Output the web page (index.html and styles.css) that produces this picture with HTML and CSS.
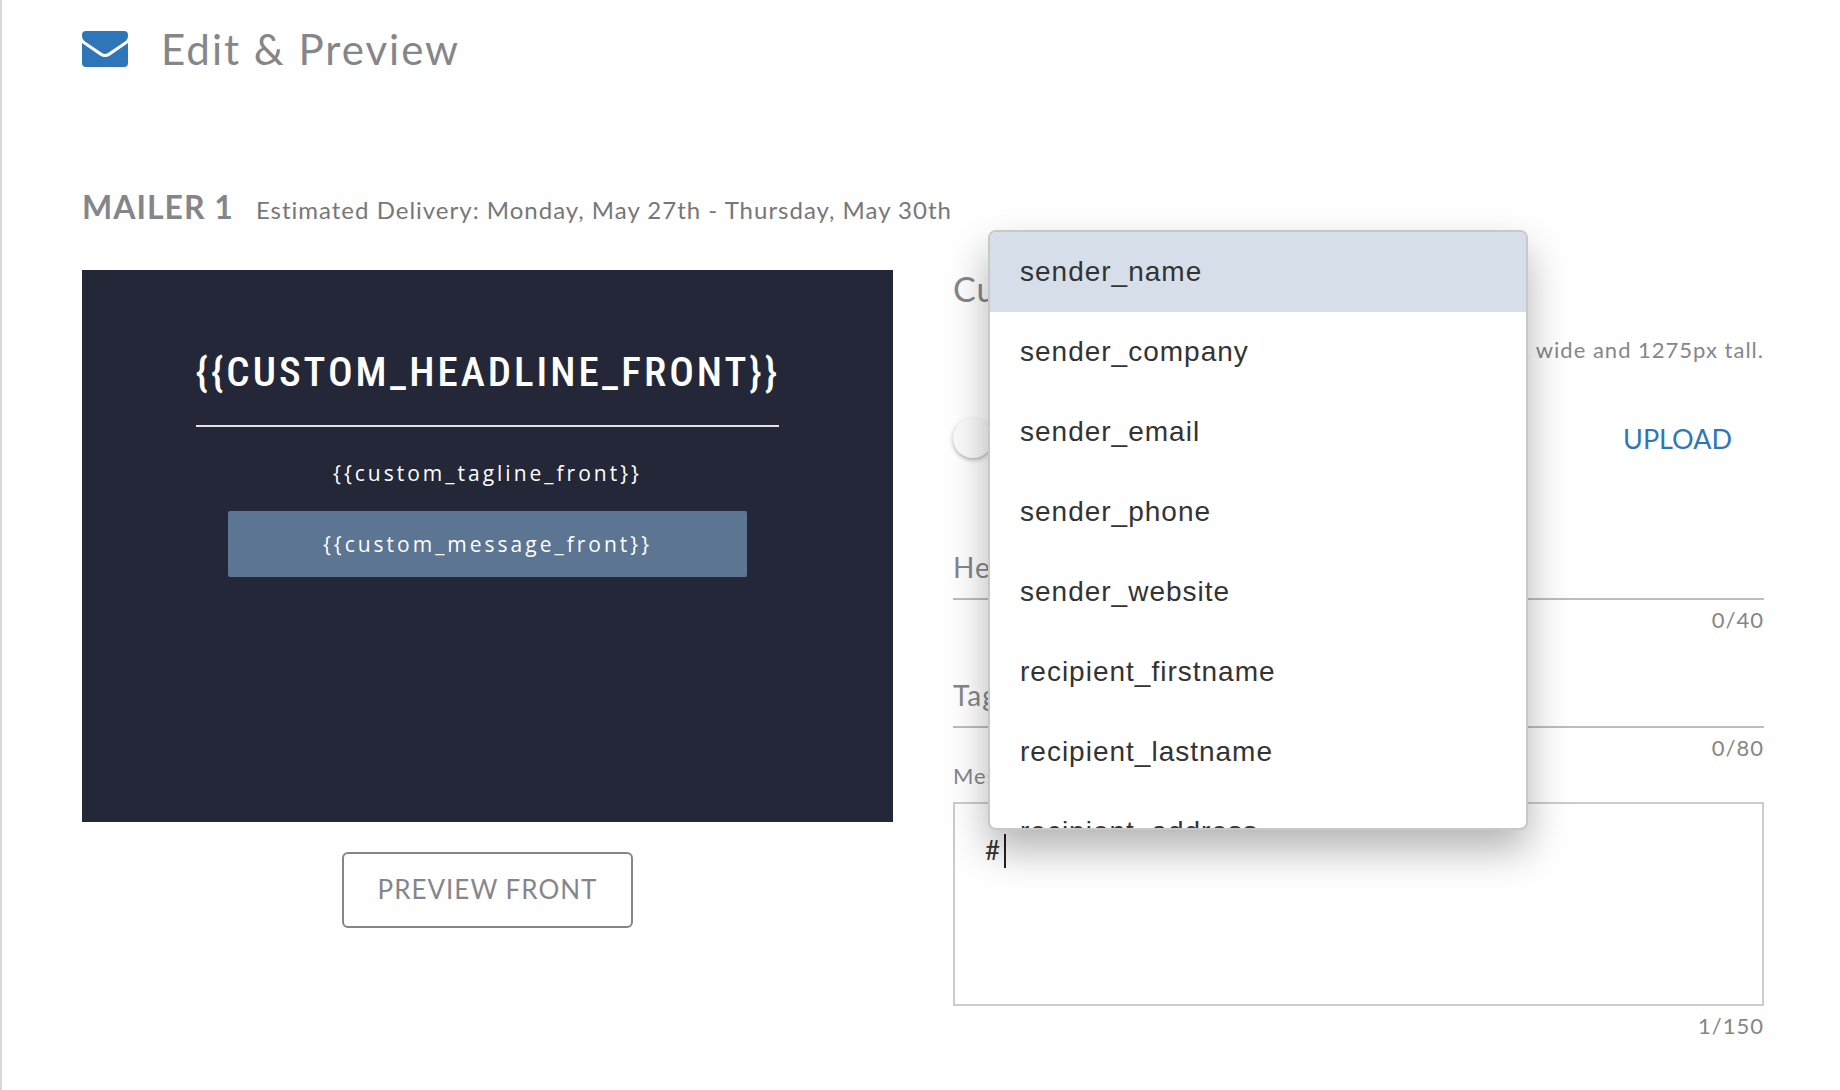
FILE: index.html
```html
<!DOCTYPE html>
<html lang="en">
<head>
  <meta charset="UTF-8">
  <meta name="viewport" content="width=device-width, initial-scale=1">
  <title>Edit &amp; Preview</title>
  <link rel="stylesheet" href="styles.css">
</head>
<body>

<main class="page">
  <header class="page-header">
    <svg class="mail-icon" viewBox="0 0 46 36" aria-hidden="true">
      <path d="M4 0h38a4 4 0 0 1 4 4v1c0 2-1 4-3 5.500L26 22q-3 2-6 0L3 10.500C1 9 0 7 0 5V4a4 4 0 0 1 4-4z"/>
      <path d="M0 12l18 12.500q5 3.200 10 0L46 12v20a4 4 0 0 1-4 4H4a4 4 0 0 1-4-4z"/>
    </svg>
    <h1>Edit &amp; Preview</h1>
  </header>

  <div class="mailer-title">
    <h2>MAILER 1</h2>
    <p>Estimated Delivery: Monday, May 27th - Thursday, May 30th</p>
  </div>

  <div class="columns">
    <section class="preview">
      <div class="card">
        <p class="card-headline">{{CUSTOM_HEADLINE_FRONT}}</p>
        <p class="card-tagline">{{custom_tagline_front}}</p>
        <p class="card-message">{{custom_message_front}}</p>
      </div>
      <button type="button" class="preview-button">PREVIEW FRONT</button>
    </section>

    <form class="editor">
      <h3>Customize Front</h3>
      <p class="note">Image must be 1875px wide and 1275px tall.</p>

      <div class="upload-row">
        <input type="checkbox" class="toggle" aria-label="Use custom background">
        <button type="button" class="upload-button">UPLOAD</button>
      </div>

      <div class="field">
        <div class="control">
          <label for="headline">Headline</label>
          <input type="text" id="headline" maxlength="40">
        </div>
        <span class="counter">0/40</span>
      </div>

      <div class="field">
        <div class="control">
          <label for="tagline">Tagline</label>
          <input type="text" id="tagline" maxlength="80">
        </div>
        <span class="counter">0/80</span>
      </div>

      <label class="message-label" for="message">Message</label>
      <div class="message-box">
        <textarea id="message" maxlength="150">#</textarea>
        <span class="caret"></span>
        <ul class="mention-list" role="listbox" aria-label="Variables">
          <li class="active" role="option" aria-selected="true">sender_name</li>
          <li role="option">sender_company</li>
          <li role="option">sender_email</li>
          <li role="option">sender_phone</li>
          <li role="option">sender_website</li>
          <li role="option">recipient_firstname</li>
          <li role="option">recipient_lastname</li>
          <li role="option">recipient_address</li>
        </ul>
      </div>
      <span class="counter">1/150</span>
    </form>
  </div>
</main>

</body>
</html>
```
FILE: styles.css
```css
* {
  box-sizing: border-box;
}
body {
  margin: 0;
  background: #fff;
  font-family: Lato, "Liberation Sans", sans-serif;
  color: #85868a;
}
h1, h2, h3, p, ul {
  margin: 0;
  padding: 0;
  font-weight: 400;
}
button, input, textarea {
  font-family: inherit;
}
.page {
  min-height: 100vh;
  padding: 23px 76px 48px 80px;
  border-left: 2px solid #d8d8d8;
}

/* header */
.page-header {
  display: flex;
  align-items: center;
  gap: 33px;
  margin-bottom: 112px;
}
.mail-icon {
  width: 46px;
  height: 36px;
  fill: #2f76b9;
}
h1 {
  font-size: 42px;
  line-height: 52px;
  letter-spacing: 2px;
}
.mailer-title {
  display: flex;
  align-items: baseline;
  gap: 22px;
  margin-bottom: 40px;
}
.mailer-title h2 {
  font-size: 32px;
  line-height: 40px;
  font-weight: 700;
  letter-spacing: 1px;
}
.mailer-title p {
  font-size: 24px;
  line-height: 40px;
  letter-spacing: 1px;
  color: #777;
}
.columns {
  display: grid;
  grid-template-columns: 1fr 1fr;
  gap: 60px;
  align-items: start;
}

/* postcard */
.preview {
  display: flex;
  flex-direction: column;
  align-items: center;
  gap: 30px;
}
.card {
  display: flex;
  flex-direction: column;
  align-items: center;
  width: 100%;
  min-height: 552px;
  padding-top: 76px;
  background: #242737;
  color: #fff;
  font-family: "Open Sans", sans-serif;
}
.card-headline {
  width: 72%;
  height: 81px;
  border-bottom: 2px solid #e4e4e8;
  font-family: "Roboto Condensed", "Liberation Sans Narrow", sans-serif;
  font-size: 41px;
  font-weight: 500;
  line-height: 52px;
  letter-spacing: 3px;
  text-align: center;
  white-space: nowrap;
}
.card-tagline,
.card-message {
  font-size: 21px;
  font-weight: 500;
  line-height: 28px;
  letter-spacing: 3px;
  text-align: center;
}
.card-tagline {
  margin: 32px 0 24px;
}
.card-message {
  width: 64%;
  padding: 19px 0;
  border-radius: 2px;
  background: #5c7592;
}
.preview-button {
  padding: 0 34px 2px;
  height: 76px;
  border: 2px solid #85868a;
  border-radius: 6px;
  background: #fff;
  color: #85868a;
  font-size: 26px;
  letter-spacing: 1px;
}

/* editor */
.editor {
  display: flex;
  flex-direction: column;
}
h3 {
  font-size: 34px;
  line-height: 38px;
  letter-spacing: 1px;
}
.note {
  margin-top: 28px;
  text-align: right;
}
.note,
.counter,
.message-label {
  font-size: 22px;
  line-height: 28px;
  letter-spacing: 1px;
}
.upload-row {
  display: flex;
  align-items: center;
  justify-content: space-between;
  height: 40px;
  margin: 54px 0 90px;
}
.toggle {
  appearance: none;
  display: flex;
  align-items: center;
  width: 72px;
  height: 28px;
  margin: 0;
  border-radius: 14px;
  background: linear-gradient(to right, transparent 20px, #bdbdbd 20px);
}
.toggle::before {
  content: "";
  width: 40px;
  height: 40px;
  flex-shrink: 0;
  border-radius: 50%;
  background: #fafafa;
  box-shadow: 0 2px 4px rgba(0, 0, 0, 0.3);
}
.upload-button {
  padding: 0 32px;
  border: 0;
  background: none;
  color: #2f76b9;
  font-size: 27px;
}
.field {
  display: flex;
  flex-direction: column;
  margin-bottom: 42px;
}
.control {
  display: grid;
  padding-bottom: 12px;
  border-bottom: 2px solid #bdbdbd;
}
.control label,
.control input {
  grid-area: 1 / 1;
  height: 38px;
  padding: 0;
  font-size: 28px;
  line-height: 38px;
  letter-spacing: 1px;
}
.control input {
  border: 0;
  background: none;
}
.counter {
  margin-top: 6px;
  text-align: right;
}
.field + .message-label {
  margin-top: -42px;
}
.message-label {
  margin-bottom: 12px;
}
.message-box {
  position: relative;
}
textarea {
  display: block;
  width: 100%;
  height: 204px;
  padding: 28px 30px;
  border: 2px solid #ccc;
  resize: none;
  color: #333;
  font-size: 26px;
  line-height: 36px;
}
.caret {
  position: absolute;
  top: 32px;
  left: 51px;
  width: 2px;
  height: 34px;
  background: #222;
}

/* variable suggestions */
.mention-list {
  position: absolute;
  left: 35px;
  bottom: 176px;
  width: 540px;
  height: 600px;
  overflow: hidden;
  border: 2px solid #c8c8c8;
  border-radius: 8px;
  background: #fff;
  box-shadow: 0 20px 40px rgba(0, 0, 0, 0.3);
  list-style: none;
}
.mention-list li {
  padding: 0 30px;
  font-family: "Liberation Sans", sans-serif;
  font-size: 28px;
  line-height: 80px;
  letter-spacing: 1px;
  color: #333;
}
.mention-list .active {
  background: #d6dfe9;
}
```
